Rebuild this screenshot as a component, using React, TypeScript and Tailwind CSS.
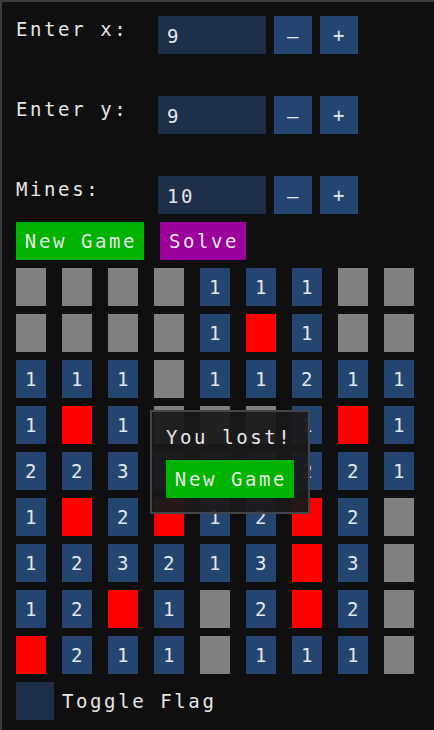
import React from "react";

type Cell = "G" | "R" | number;

const board: Cell[][] = [
  ["G", "G", "G", "G", 1, 1, 1, "G", "G"],
  ["G", "G", "G", "G", 1, "R", 1, "G", "G"],
  [1, 1, 1, "G", 1, 1, 2, 1, 1],
  [1, "R", 1, "G", "G", "G", 1, "R", 1],
  [2, 2, 3, 1, 1, 1, 2, 2, 1],
  [1, "R", 2, "R", 1, 2, "R", 2, "G"],
  [1, 2, 3, 2, 1, 3, "R", 3, "G"],
  [1, 2, "R", 1, "G", 2, "R", 2, "G"],
  ["R", 2, 1, 1, "G", 1, 1, 1, "G"],
];

const font = { fontFamily: '"DejaVu Sans Mono", "Liberation Mono", monospace' };

function NumberRow({ label, value, className }: { label: string; value: string; className?: string }) {
  return (
    <div className={`flex items-start ${className ?? ""}`}>
      <div className="w-[142px] leading-[26px]">{label}</div>
      <div className="w-[108px] h-[38px] bg-[#1d2f49] pl-[9px] pt-[3px] flex items-center">{value}</div>
      <button className="ml-2 w-[38px] h-[38px] bg-[#234570] flex items-center justify-center pl-[2px] pt-[2px]">–</button>
      <button className="ml-2 w-[38px] h-[38px] bg-[#234570] flex items-center justify-center pl-[2px] pt-[1px]">+</button>
    </div>
  );
}

function Tile({ cell }: { cell: Cell }) {
  if (cell === "G") return <div className="w-[30px] h-[38px] bg-[#808080]" />;
  if (cell === "R") return <div className="w-[30px] h-[38px] bg-[#ff0000]" />;
  return (
    <div className="w-[30px] h-[38px] bg-[#234570] flex items-center justify-center pl-[2px]">{cell}</div>
  );
}

export default function App() {
  return (
    <div
      className="relative w-[434px] h-[730px] overflow-hidden bg-[#0f0f0f] border-t-2 border-l-2 border-[#3a3a40] text-[19px] tracking-[2.6px] text-[#e6e6e6]"
      style={font}
    >
      <div className="pl-[14px] pt-[14px]">
        <NumberRow label="Enter x:" value="9" />
        <NumberRow label="Enter y:" value="9" className="mt-[42px]" />
        <NumberRow label="Mines:" value="10" className="mt-[42px]" />

        <div className="mt-2 flex gap-4">
          <button className="w-[128px] h-[38px] bg-[#00b300] flex items-center justify-center pl-[2px]">New Game</button>
          <button className="w-[86px] h-[38px] bg-[#9c009c] flex items-center justify-center pl-[2px]">Solve</button>
        </div>

        <div className="mt-2 grid grid-cols-[repeat(9,30px)] gap-x-4 gap-y-2">
          {board.map((row, r) => row.map((cell, c) => <Tile key={`${r}-${c}`} cell={cell} />))}
        </div>

        <div className="mt-2 flex items-center gap-2">
          <div className="w-[38px] h-[38px] bg-[#1d2f49]" />
          <span>Toggle Flag</span>
        </div>
      </div>

      <div className="absolute left-[148px] top-[408px] w-[160px] h-[104px] border-2 border-[#44444d] bg-[rgba(26,26,26,0.94)] p-[14px] flex flex-col gap-3">
        <div className="leading-[22px]">You lost!</div>
        <button className="w-[128px] h-[38px] bg-[#00b300] flex items-center justify-center pl-[2px]">New Game</button>
      </div>
    </div>
  );
}
